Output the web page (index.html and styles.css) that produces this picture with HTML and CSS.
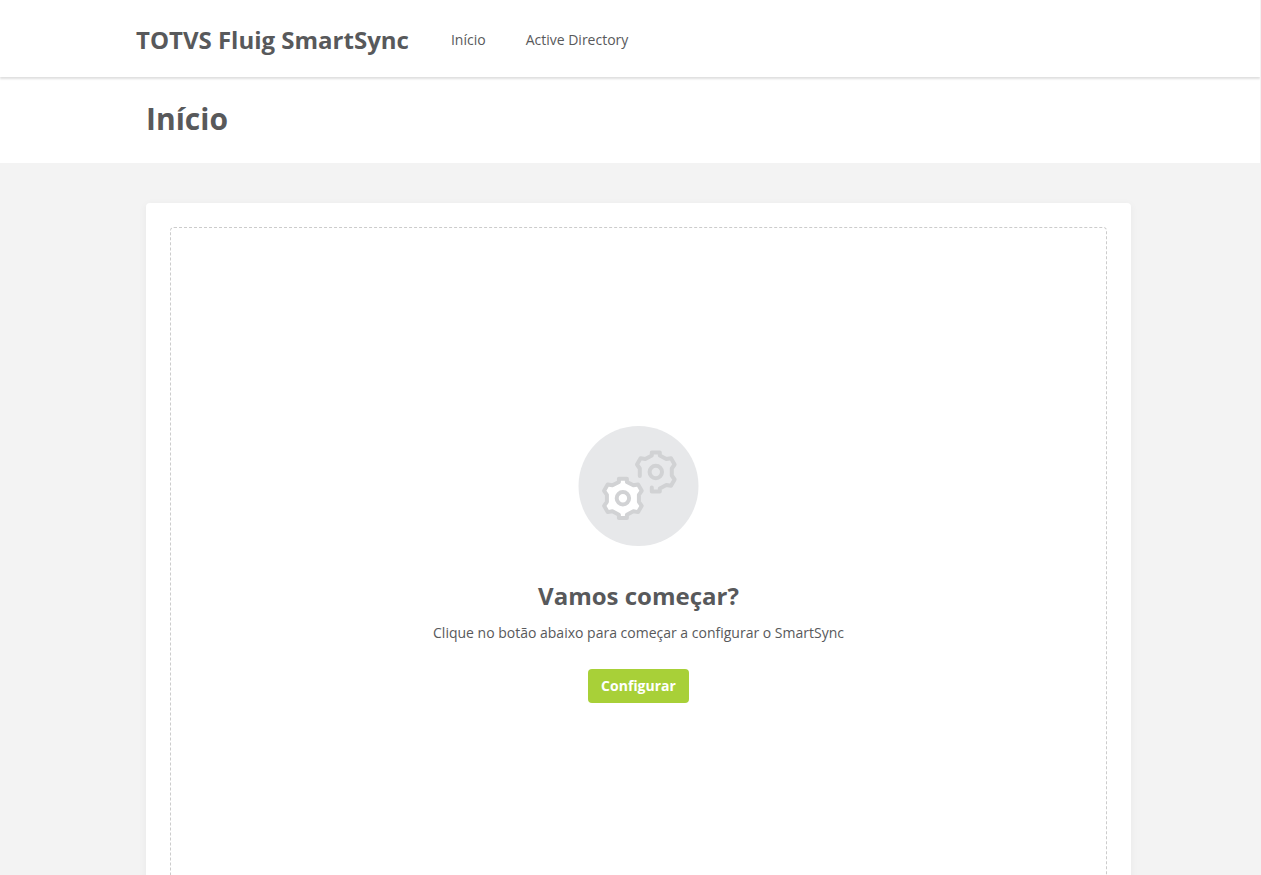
FILE: index.html
```html
<!DOCTYPE html>
<html lang="pt-BR">

<head>
    <meta charset="utf-8">
    <meta name="viewport" content="width=device-width, initial-scale=1.0">
    <title>TOTVS Fluig SmartSync</title>
    <link rel="stylesheet" href="styles.css">
</head>

<body>
    <div class="app">
        <header class="topbar">
            <div class="topbar-inner">
                <a class="brand" href="#">TOTVS Fluig SmartSync</a>
                <nav class="menu">
                    <a href="#">Início</a>
                    <a href="#">Active Directory</a>
                </nav>
            </div>
        </header>

        <div class="page-header">
            <h1 class="container">Início</h1>
        </div>

        <main class="content">
            <div class="container card">
                <section class="empty-state">
                    <svg class="empty-icon" viewBox="0 0 120 120" aria-hidden="true">
                        <circle cx="59.5" cy="60" r="60" fill="#e7e8ea" />
                        <g fill="none" stroke="#d1d2d4" stroke-width="4" stroke-linejoin="round" stroke-linecap="round">
                            <g transform="translate(76.8 46)">
                                <path d="M-16 4V-3.5L-18.8 -7.5L-15.2 -13.8L-10.5 -13L-4 -16.4V-19.6H4V-16.4L10.5 -13L15.2 -13.8L18.8 -7.5L16 -3.5V3.5L18.8 7.5L15.2 13.8L10.5 13L4 16.4V19.6H-4V15.5" />
                                <circle r="6.2" />
                            </g>
                            <g transform="translate(43.9 72.3)">
                                <path fill="#fff" d="M-16 3.5V-3.5L-18.8 -7.5L-15.2 -13.8L-10.5 -13L-4 -16.4V-19.6H4V-16.4L10.5 -13L15.2 -13.8L18.8 -7.5L16 -3.5V3.5L18.8 7.5L15.2 13.8L10.5 13L4 16.4V19.6H-4V16.4L-10.5 13L-15.2 13.8L-18.8 7.5Z" />
                                <circle r="6.2" />
                            </g>
                        </g>
                    </svg>
                    <h2>Vamos começar?</h2>
                    <p>Clique no botão abaixo para começar a configurar o SmartSync</p>
                    <button class="btn" type="button">Configurar</button>
                </section>
            </div>
        </main>
    </div>
</body>

</html>
```

FILE: styles.css
```css
* {
    box-sizing: border-box;
}

body {
    margin: 0;
    font-family: "Open Sans", sans-serif;
    font-size: 14px;
    line-height: 20px;
    color: #58595b;
    background-color: #f3f3f3;
}

.app {
    display: flex;
    flex-direction: column;
    height: 100vh;
    overflow: hidden;
    border-right: 1px solid #f3f3f3;
}

.container {
    width: 100%;
    max-width: 985px;
    margin: 0 auto;
}

.topbar,
.page-header,
.content {
    padding-left: 17px;
    flex-shrink: 0;
}

.topbar {
    position: relative;
    background-color: #fff;
    box-shadow: 0 2px 2px rgba(0, 0, 0, 0.13);
}

.topbar-inner {
    display: flex;
    align-items: center;
    gap: 42px;
    max-width: 1005px;
    height: 77px;
    margin: 0 auto;
    padding-top: 3px;
}

.topbar a {
    color: #58595b;
    text-decoration: none;
}

.brand {
    font-size: 24px;
    font-weight: 700;
    line-height: 32px;
}

.menu {
    display: flex;
    gap: 40px;
}

.page-header {
    background-color: #fff;
    padding-top: 22px;
    padding-bottom: 24px;
}

h1 {
    font-size: 30px;
    font-weight: 700;
    line-height: 40px;
}

.content {
    display: flex;
    flex-grow: 1;
    padding-top: 40px;
}

.card {
    padding: 24px;
    background-color: #fff;
    border-radius: 4px;
    box-shadow: 0 2px 8px rgba(0, 0, 0, 0.05);
}

.empty-state {
    display: flex;
    flex-direction: column;
    align-items: center;
    padding: 198px 20px;
    text-align: center;
    border: 1px dashed #ccc;
    border-radius: 4px;
}

.empty-icon {
    width: 120px;
    height: 120px;
    overflow: visible;
}

h2 {
    margin: 34px 0 11px;
    font-size: 24px;
    font-weight: 700;
    line-height: 32px;
}

p {
    margin: 0 0 26px;
}

.btn {
    padding: 7px 13px;
    border: none;
    border-radius: 4px;
    background-color: #a8d038;
    color: #fff;
    font-family: inherit;
    font-size: 14px;
    font-weight: 700;
    line-height: 20px;
    cursor: pointer;
}
```
